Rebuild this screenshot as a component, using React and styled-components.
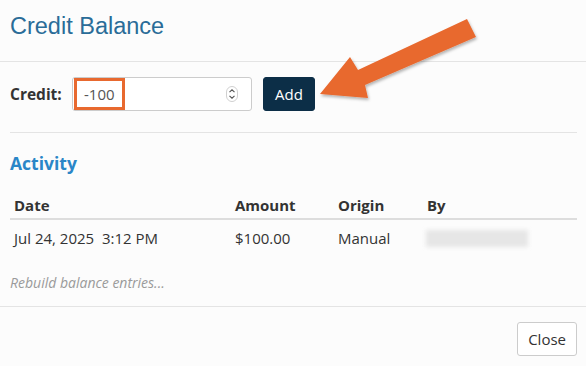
import React from "react";
import styled, { createGlobalStyle } from "styled-components";

const Global = createGlobalStyle`
  html, body { margin: 0; padding: 0; background: #fcfcfc; }
  body { font-family: "Open Sans", "Liberation Sans", sans-serif; color: #333; }
  * { box-sizing: border-box; }
`;

const Modal = styled.div`
  position: relative;
  width: 586px;
  height: 366px;
  background: #fcfcfc;
  display: flex;
  flex-direction: column;
  overflow: hidden;
`;

const Header = styled.div`
  height: 62px;
  padding: 0 10px;
  display: flex;
  align-items: center;
  border-bottom: 1px solid #e4e4e4;
`;

const Title = styled.h4`
  margin: 0 0 8px 0;
  font-family: "Liberation Sans", Arial, sans-serif;
  font-weight: 400;
  font-size: 23.5px;
  color: #2a6c98;
`;

const Body = styled.div`
  padding: 15px 9px 0 10px;
  flex: 1;
`;

const CreditRow = styled.div`
  display: flex;
  align-items: center;
  height: 34px;
  padding-bottom: 21px;
  box-sizing: content-box;
  border-bottom: 1px solid #e4e4e4;
`;

const Label = styled.label`
  font-weight: 700;
  font-size: 15.5px;
  color: #333;
  width: 62px;
`;

const InputBox = styled.div`
  position: relative;
  width: 180px;
  height: 34px;
  border: 1px solid #ccc;
  border-radius: 3px;
  background: #fff;
  display: flex;
  align-items: center;
  justify-content: space-between;
  padding: 0 13px 0 11px;
  font-size: 15px;
  color: #555;
`;

const Highlight = styled.span`
  position: absolute;
  left: 1px;
  top: 0px;
  width: 51px;
  height: 32px;
  border: 3px solid #e8692f;
`;

const Value = styled.span`
  position: relative;
`;

const Button = styled.button`
  height: 34px;
  padding: 0 ${(p) => (p.$primary ? 11 : 10)}px;
  border-radius: 3px;
  font-family: "Open Sans", sans-serif;
  font-size: 15px;
  cursor: pointer;
  background: ${(p) => (p.$primary ? "#0c2e47" : "#fff")};
  color: ${(p) => (p.$primary ? "#fff" : "#333")};
  border: 1px solid ${(p) => (p.$primary ? "#0c2e47" : "#ccc")};
  margin-left: ${(p) => p.$ml || 0}px;
`;

const SectionTitle = styled.h5`
  margin: 18px 0 0 0;
  font-size: 17.5px;
  font-weight: 700;
  color: #2a86c7;
  line-height: 24px;
`;

const Table = styled.div`
  margin-top: 16px;
  width: 567px;
`;

const Row = styled.div`
  display: grid;
  grid-template-columns: 221px 103px 89px 1fr;
  border-bottom: ${(p) => (p.$head ? "2px solid #dddddd" : "none")};
  height: ${(p) => (p.$head ? "29px" : "36px")};
  align-items: center;
  font-size: 15px;
  font-weight: ${(p) => (p.$head ? 700 : 400)};
  color: #333;
`;

const Cell = styled.div`
  padding-left: 4px;
  white-space: pre;
`;

const Blurred = styled.div`
  margin-left: -1px;
  width: 102px;
  height: 17px;
  background: #e6e6e6;
  filter: blur(2px);
`;

const Note = styled.div`
  margin-top: 17px;
  font-size: 14px;
  font-style: italic;
  color: #9a9a9a;
`;

const Footer = styled.div`
  height: 60px;
  border-top: 1px solid #e4e4e4;
  display: flex;
  justify-content: flex-end;
  align-items: flex-start;
  padding: 15px 9px 0 0;
`;

const ArrowLayer = styled.svg`
  position: absolute;
  left: 0;
  top: 0;
  pointer-events: none;
`;

const Spinner = () => (
  <svg width="12" height="16" viewBox="0 0 12 16">
    <rect x="0.5" y="0.5" width="11" height="15" rx="5.5" fill="none" stroke="#d0d0d0" />
    <path d="M3.5 6.2 L6 3.8 L8.5 6.2" fill="none" stroke="#555" strokeWidth="1.1" />
    <path d="M3.5 9.8 L6 12.2 L8.5 9.8" fill="none" stroke="#555" strokeWidth="1.1" />
  </svg>
);

export default function App() {
  return (
    <>
      <Global />
      <Modal>
        <Header>
          <Title>Credit Balance</Title>
        </Header>
        <Body>
          <CreditRow>
            <Label>Credit:</Label>
            <InputBox>
              <Highlight />
              <Value>-100</Value>
              <Spinner />
            </InputBox>
            <Button $primary $ml={11}>Add</Button>
          </CreditRow>
          <SectionTitle>Activity</SectionTitle>
          <Table>
            <Row $head>
              <Cell>Date</Cell>
              <Cell>Amount</Cell>
              <Cell>Origin</Cell>
              <Cell>By</Cell>
            </Row>
            <Row>
              <Cell>{"Jul 24, 2025  3:12 PM"}</Cell>
              <Cell>$100.00</Cell>
              <Cell>Manual</Cell>
              <Cell><Blurred /></Cell>
            </Row>
          </Table>
          <Note>Rebuild balance entries...</Note>
        </Body>
        <Footer>
          <Button>Close</Button>
        </Footer>
        <ArrowLayer width="586" height="366" viewBox="0 0 586 366">
          <defs>
            <filter id="sh" x="-20%" y="-20%" width="140%" height="140%">
              <feDropShadow dx="1" dy="2" stdDeviation="1.5" floodColor="#000" floodOpacity="0.3" />
            </filter>
          </defs>
          <polygon
            filter="url(#sh)"
            fill="#e8692f"
            points="467,19 476,37 365,85 368,98 320,94 350,57 358,70"
          />
        </ArrowLayer>
      </Modal>
    </>
  );
}
